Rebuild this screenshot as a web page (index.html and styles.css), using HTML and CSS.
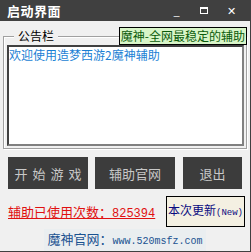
FILE: index.html
```html
<!DOCTYPE html>
<html lang="zh-CN">
<head>
  <meta charset="UTF-8" />
  <title>启动界面</title>
  <link rel="stylesheet" href="styles.css">
</head>
<body>
  <div class="window">
    <div class="titlebar">
      <span class="title">启动界面</span>
      <div class="controls">
        <span class="ctl">_</span>
        <span class="ctl box"></span>
        <span class="ctl">✕</span>
      </div>
    </div>

    <div class="content">
      <div class="group">
        <span class="legend">公告栏</span>
        <span class="slogan">魔神-全网最稳定的辅助</span>
        <div class="board">欢迎使用造梦西游2魔神辅助</div>
      </div>

      <div class="buttons">
        <button class="btn start">开始游戏</button>
        <button class="btn site-btn">辅助官网</button>
        <button class="btn quit">退出</button>
      </div>

      <div class="info">
        <a class="count">辅助已使用次数：<span class="num">825394</span></a>
        <span class="update">本次更新<span class="mono">(New)</span></span>
      </div>

      <div class="footer">
        <span class="site">魔神官网：<span class="url">www.520msfz.com</span></span>
      </div>
    </div>
  </div>
</body>
</html>
```

FILE: styles.css
```css
* { margin: 0; padding: 0; box-sizing: border-box; }

body {
  font-family: "Noto Sans CJK SC", "Noto Sans", sans-serif;
  background: #f0f0f0;
  width: 251px;
  height: 252px;
  overflow: hidden;
}

.window {
  width: 251px;
  height: 252px;
  display: flex;
  flex-direction: column;
  border-right: 1px solid #404040;
  border-bottom: 1px solid #404040;
}

.titlebar {
  height: 32px;
  background: #404040;
  color: #fff;
  display: flex;
  align-items: center;
  justify-content: space-between;
  padding: 0 14px 0 7px;
}

.title {
  font-size: 13px;
  font-weight: bold;
  letter-spacing: 0.5px;
}

.controls {
  display: flex;
  align-items: center;
  gap: 19px;
  font-size: 11px;
}

.ctl {
  width: 9px;
  text-align: center;
  line-height: 1;
}

.ctl.box {
  width: 8px;
  height: 7px;
  border: 1px solid #fff;
  border-top-width: 2px;
}

.content {
  flex: 1;
  padding: 7px 3px 0 3px;
  display: flex;
  flex-direction: column;
}

.group {
  position: relative;
  margin-top: 8px;
  border: 1px solid #a0a0a0;
  box-shadow: inset 1px 1px 0 #fff, 1px 1px 0 #fff;
  padding: 8px 2px 2px 3px;
}

.legend {
  position: absolute;
  top: -9px;
  left: 10px;
  padding: 0 4px;
  background: #f0f0f0;
  font-size: 12px;
  line-height: 16px;
  color: #000;
}

.slogan {
  position: absolute;
  top: -10px;
  right: -1px;
  background: #d8f5c8;
  border: 1px solid #000;
  color: #0a5a0a;
  font-size: 12px;
  line-height: 16px;
  padding: 0 1px;
}

.board {
  height: 101px;
  background: #fff;
  border: 2px solid #404040;
  border-right-color: #808080;
  border-bottom-color: #808080;
  color: #1a7fd4;
  font-size: 12px;
  line-height: 14px;
  padding-top: 1px;
}

.buttons {
  display: flex;
  gap: 7px;
  margin: 8px 5px 0 5px;
}

.btn {
  height: 32px;
  background: #3c3c3c;
  border: none;
  color: #c8c8c8;
  font-family: inherit;
  font-size: 13px;
}

.start {
  width: 80px;
  letter-spacing: 5px;
  padding-left: 5px;
}
.site-btn { width: 80px; }
.quit { width: 59px; margin-left: 1px; }

.info {
  display: flex;
  justify-content: space-between;
  align-items: center;
  margin: 7px 2px 0 5px;
}

.count {
  color: #e01010;
  text-decoration: underline;
  font-size: 13px;
}

.num {
  font-family: "Liberation Mono", monospace;
  font-size: 12px;
}

.update {
  border: 1px solid #000;
  background: #f4f0e2;
  color: #0a0a80;
  font-size: 12px;
  padding: 5px 1px;
  line-height: 15px;
}

.mono {
  font-family: "Liberation Mono", monospace;
  font-size: 9px;
}

.footer {
  display: flex;
  justify-content: center;
  margin-top: 2px;
}

.site {
  background: #eaeef0;
  color: #1a5290;
  font-size: 13px;
  padding: 0 3px;
  line-height: 19px;
}

.url {
  font-family: "Liberation Mono", monospace;
  font-size: 10px;
}
```
